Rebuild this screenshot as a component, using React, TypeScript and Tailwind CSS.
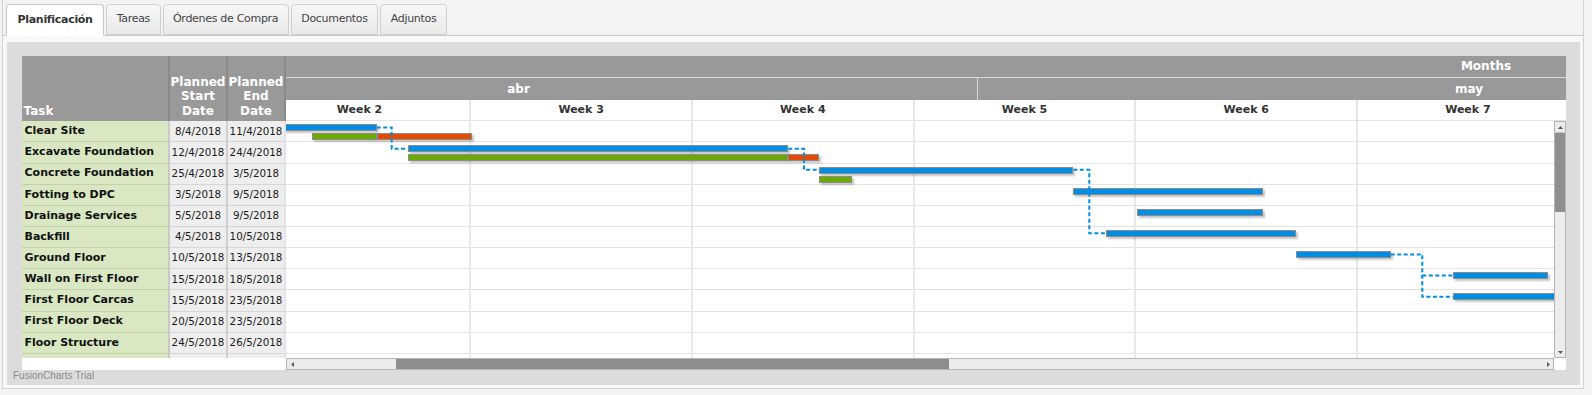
import React from 'react';

const ROW_H = 21.15;

const tabs = ['Planificación', 'Tareas', 'Órdenes de Compra', 'Documentos', 'Adjuntos'];

const tasks = [
  ['Clear Site', '8/4/2018', '11/4/2018'],
  ['Excavate Foundation', '12/4/2018', '24/4/2018'],
  ['Concrete Foundation', '25/4/2018', '3/5/2018'],
  ['Fotting to DPC', '3/5/2018', '9/5/2018'],
  ['Drainage Services', '5/5/2018', '9/5/2018'],
  ['Backfill', '4/5/2018', '10/5/2018'],
  ['Ground Floor', '10/5/2018', '13/5/2018'],
  ['Wall on First Floor', '15/5/2018', '18/5/2018'],
  ['First Floor Carcas', '15/5/2018', '23/5/2018'],
  ['First Floor Deck', '20/5/2018', '23/5/2018'],
  ['Floor Structure', '24/5/2018', '26/5/2018'],
  ['', '', ''],
];

const weeks = ['Week 2', 'Week 3', 'Week 4', 'Week 5', 'Week 6', 'Week 7'];

// planned = blue (top lane), actual = green, delay = orange (bottom lane)
const bars = [
  { row: 0, lane: 0, x: -37, w: 127.7, c: 'bg-[#008ee4]' },
  { row: 0, lane: 1, x: 26.3, w: 64.4, c: 'bg-[#6baa01]' },
  { row: 0, lane: 1, x: 90.7, w: 95, c: 'bg-[#e44a00]' },
  { row: 1, lane: 0, x: 121.7, w: 380.6, c: 'bg-[#008ee4]' },
  { row: 1, lane: 1, x: 121.7, w: 380.6, c: 'bg-[#6baa01]' },
  { row: 1, lane: 1, x: 502.3, w: 31, c: 'bg-[#e44a00]' },
  { row: 2, lane: 0, x: 533.3, w: 254, c: 'bg-[#008ee4]' },
  { row: 2, lane: 1, x: 533.3, w: 32.4, c: 'bg-[#6baa01]' },
  { row: 3, lane: 0, x: 787.3, w: 190, c: 'bg-[#008ee4]' },
  { row: 4, lane: 0, x: 850.7, w: 126.6, c: 'bg-[#008ee4]' },
  { row: 5, lane: 0, x: 819.7, w: 190, c: 'bg-[#008ee4]' },
  { row: 6, lane: 0, x: 1009.7, w: 95, c: 'bg-[#008ee4]' },
  { row: 7, lane: 0, x: 1167.3, w: 94.7, c: 'bg-[#008ee4]' },
  { row: 8, lane: 0, x: 1167.3, w: 285, c: 'bg-[#008ee4]' },
];

const cy = (r: number) => r * ROW_H + 6.5;

const links = [
  `M90.7 ${cy(0)} H105.7 V${cy(1)} H121.7`,
  `M502.3 ${cy(1)} H518 V${cy(2)} H533.3`,
  `M787.3 ${cy(2)} H803.3 V${cy(5)} H819.7`,
  `M1104.7 ${cy(6)} H1136.3 V${cy(8)} H1167.3 M1136.3 ${cy(7)} H1167.3`,
];

const Tri: React.FC<{ d: string }> = ({ d }) => (
  <svg width="5" height="5" viewBox="0 0 5 5">
    <path d={d} fill="#5a5a5a" />
  </svg>
);

const App: React.FC = () => {
  return (
    <div className="w-[1592px] h-[395px] bg-[#f3f3f3] pl-[2px] pr-[8px] pb-[6px] font-['DejaVu_Sans',sans-serif]">
      <div className="h-full flex flex-col border-l border-r border-b border-[#d2d2d2]">

        {/* TABS */}
        <div className="h-[36px] shrink-0 pt-[4px] pl-[3px] flex gap-[2px] border-b border-[#c8c8c8]">
          {tabs.map((t, i) =>
            i === 0 ? (
              <div key={t} className="h-[32px] -mb-px px-[10.5px] flex items-center rounded-t-[4px] border border-[#c8c8c8] border-b-white bg-white text-[11px] font-bold text-[#333] tracking-[-0.3px]">
                {t}
              </div>
            ) : (
              <div key={t} className="h-[31px] px-[9.5px] flex items-center rounded-t-[4px] border border-[#cfcfcf] bg-linear-to-b from-[#f7f7f7] to-[#e9e9e9] text-[11px] text-[#444] tracking-[-0.3px]">
                {t}
              </div>
            )
          )}
        </div>

        {/* PANEL */}
        <div className="flex-1 bg-[#f8f8f8] pt-[6px] pl-[4px] pr-[3px] pb-[3px]">
          <div className="h-full bg-[#dcdcdc] pt-[14px] pl-[6px]">
            <div className="ml-[9px] w-[1544px] h-[314.3px] bg-white flex flex-col">

              {/* HEADER */}
              <div className="flex h-[65.3px] shrink-0 text-white text-[12px] font-bold">
                <div className="w-[148px] bg-[#999] border-r-2 border-[#8a8a8a] flex items-end pl-[1.5px] pb-[3px] leading-[14.5px]">
                  Task
                </div>
                <div className="w-[58px] bg-[#999] border-r-2 border-[#8a8a8a] flex items-end justify-center pb-[3px] leading-[14.5px] text-center whitespace-nowrap">
                  Planned<br />Start<br />Date
                </div>
                <div className="w-[58px] bg-[#999] border-r-2 border-[#8a8a8a] flex items-end justify-center pb-[3px] leading-[14.5px] text-center whitespace-nowrap">
                  Planned<br />End<br />Date
                </div>
                <div className="w-[1280px] flex flex-col">
                  <div className="h-[21.7px] bg-[#999] border-b border-[#d6d6d6] leading-[20.7px]">
                    <div className="ml-[1150px] w-[100px] text-center">Months</div>
                  </div>
                  <div className="h-[22px] bg-[#999] flex leading-[22px]">
                    <div className="w-[692px] border-r border-[#d6d6d6]">
                      <div className="w-[465px] text-center">abr</div>
                    </div>
                    <div className="flex-1">
                      <div className="ml-[441px] w-[100px] text-center">may</div>
                    </div>
                  </div>
                  <div className="h-[21.6px] bg-white border-b border-[#e2e2e2] overflow-hidden">
                    <div className="flex -ml-[36.4px] h-full">
                      {weeks.map((w) => (
                        <div key={w} className="w-[221.7px] shrink-0 border-r-2 border-[#e6e6e6] flex items-center justify-center text-[11px] text-[#333]">
                          {w}
                        </div>
                      ))}
                    </div>
                  </div>
                </div>
              </div>

              {/* BODY */}
              <div className="flex h-[237px] shrink-0">
                <div className="w-[264px] overflow-hidden flex flex-col">
                  {tasks.map(([name, start, end], i) => (
                    <div key={i} className="flex h-[21.15px] shrink-0">
                      <div className="w-[148px] bg-[#d9e8c2] border-r-2 border-r-[#c8c8c8] border-b border-b-[#c2d0ab] flex items-center pl-[2.5px] text-[11px] font-bold text-[#111] whitespace-nowrap">
                        {name}
                      </div>
                      <div className="w-[58px] bg-[#eeeeee] border-r-2 border-r-[#cfcfcf] border-b border-b-[#d6d6d6] flex items-center justify-center text-[10.3px] text-[#1a1a1a] whitespace-nowrap">
                        {start}
                      </div>
                      <div className="w-[58px] bg-[#eeeeee] border-r-2 border-r-[#e3e3e3] border-b border-b-[#d6d6d6] flex items-center justify-center text-[10.3px] text-[#1a1a1a] whitespace-nowrap">
                        {end}
                      </div>
                    </div>
                  ))}
                </div>

                {/* TIMELINE */}
                <div className="w-[1268px] relative overflow-hidden">
                  <div className="flex flex-col">
                    {tasks.map((_, i) => (
                      <div key={i} className="h-[21.15px] shrink-0 border-b border-[#e3e3e3]"></div>
                    ))}
                  </div>
                  <div className="absolute top-0 bottom-0 left-[-36.4px] flex">
                    {weeks.map((w) => (
                      <div key={w} className="w-[221.7px] h-full shrink-0 border-r-2 border-[#e8e8e8]"></div>
                    ))}
                  </div>
                  {bars.map((b, i) => (
                    <div
                      key={i}
                      className={`absolute h-[7px] border border-[#8c8c8c] shadow-[2px_2px_2px_rgba(0,0,0,0.22)] ${b.c}`}
                      style={{ left: b.x, width: b.w, top: b.row * ROW_H + (b.lane === 0 ? 3 : 12) }}
                    ></div>
                  ))}
                  <svg className="absolute inset-0" width="1268" height="237">
                    {links.map((d, i) => (
                      <path key={i} d={d} fill="none" stroke="#008ee4" strokeWidth="2" strokeDasharray="4 2.5" />
                    ))}
                  </svg>
                </div>

                {/* V SCROLL */}
                <div className="w-[12px] flex flex-col border border-[#b4b4b4] bg-[#ececec]">
                  <div className="h-[11px] flex items-center justify-center border-b border-[#c8c8c8]">
                    <Tri d="M0 4 L2.5 1 L5 4Z" />
                  </div>
                  <div className="h-[79px] bg-[#8f8f8f]"></div>
                  <div className="flex-1"></div>
                  <div className="h-[9px] flex items-center justify-center">
                    <Tri d="M0 1 L2.5 4 L5 1Z" />
                  </div>
                </div>
              </div>

              {/* H SCROLL */}
              <div className="flex h-[12px] shrink-0">
                <div className="w-[264px]"></div>
                <div className="w-[1268px] flex border border-[#b4b4b4] bg-[#ececec]">
                  <div className="w-[11px] flex items-center justify-center">
                    <Tri d="M4 0 L1 2.5 L4 5Z" />
                  </div>
                  <div className="w-[98px]"></div>
                  <div className="w-[553px] bg-[#8d8d8d]"></div>
                  <div className="flex-1"></div>
                  <div className="w-[10px] flex items-center justify-center">
                    <Tri d="M1 0 L4 2.5 L1 5Z" />
                  </div>
                </div>
                <div className="w-[12px]"></div>
              </div>
            </div>

            <div className="text-[10px] leading-[11px] text-[#8a8a8a] font-['Liberation_Sans',sans-serif]">
              FusionCharts Trial
            </div>
          </div>
        </div>
      </div>
    </div>
  );
};

export default App;
